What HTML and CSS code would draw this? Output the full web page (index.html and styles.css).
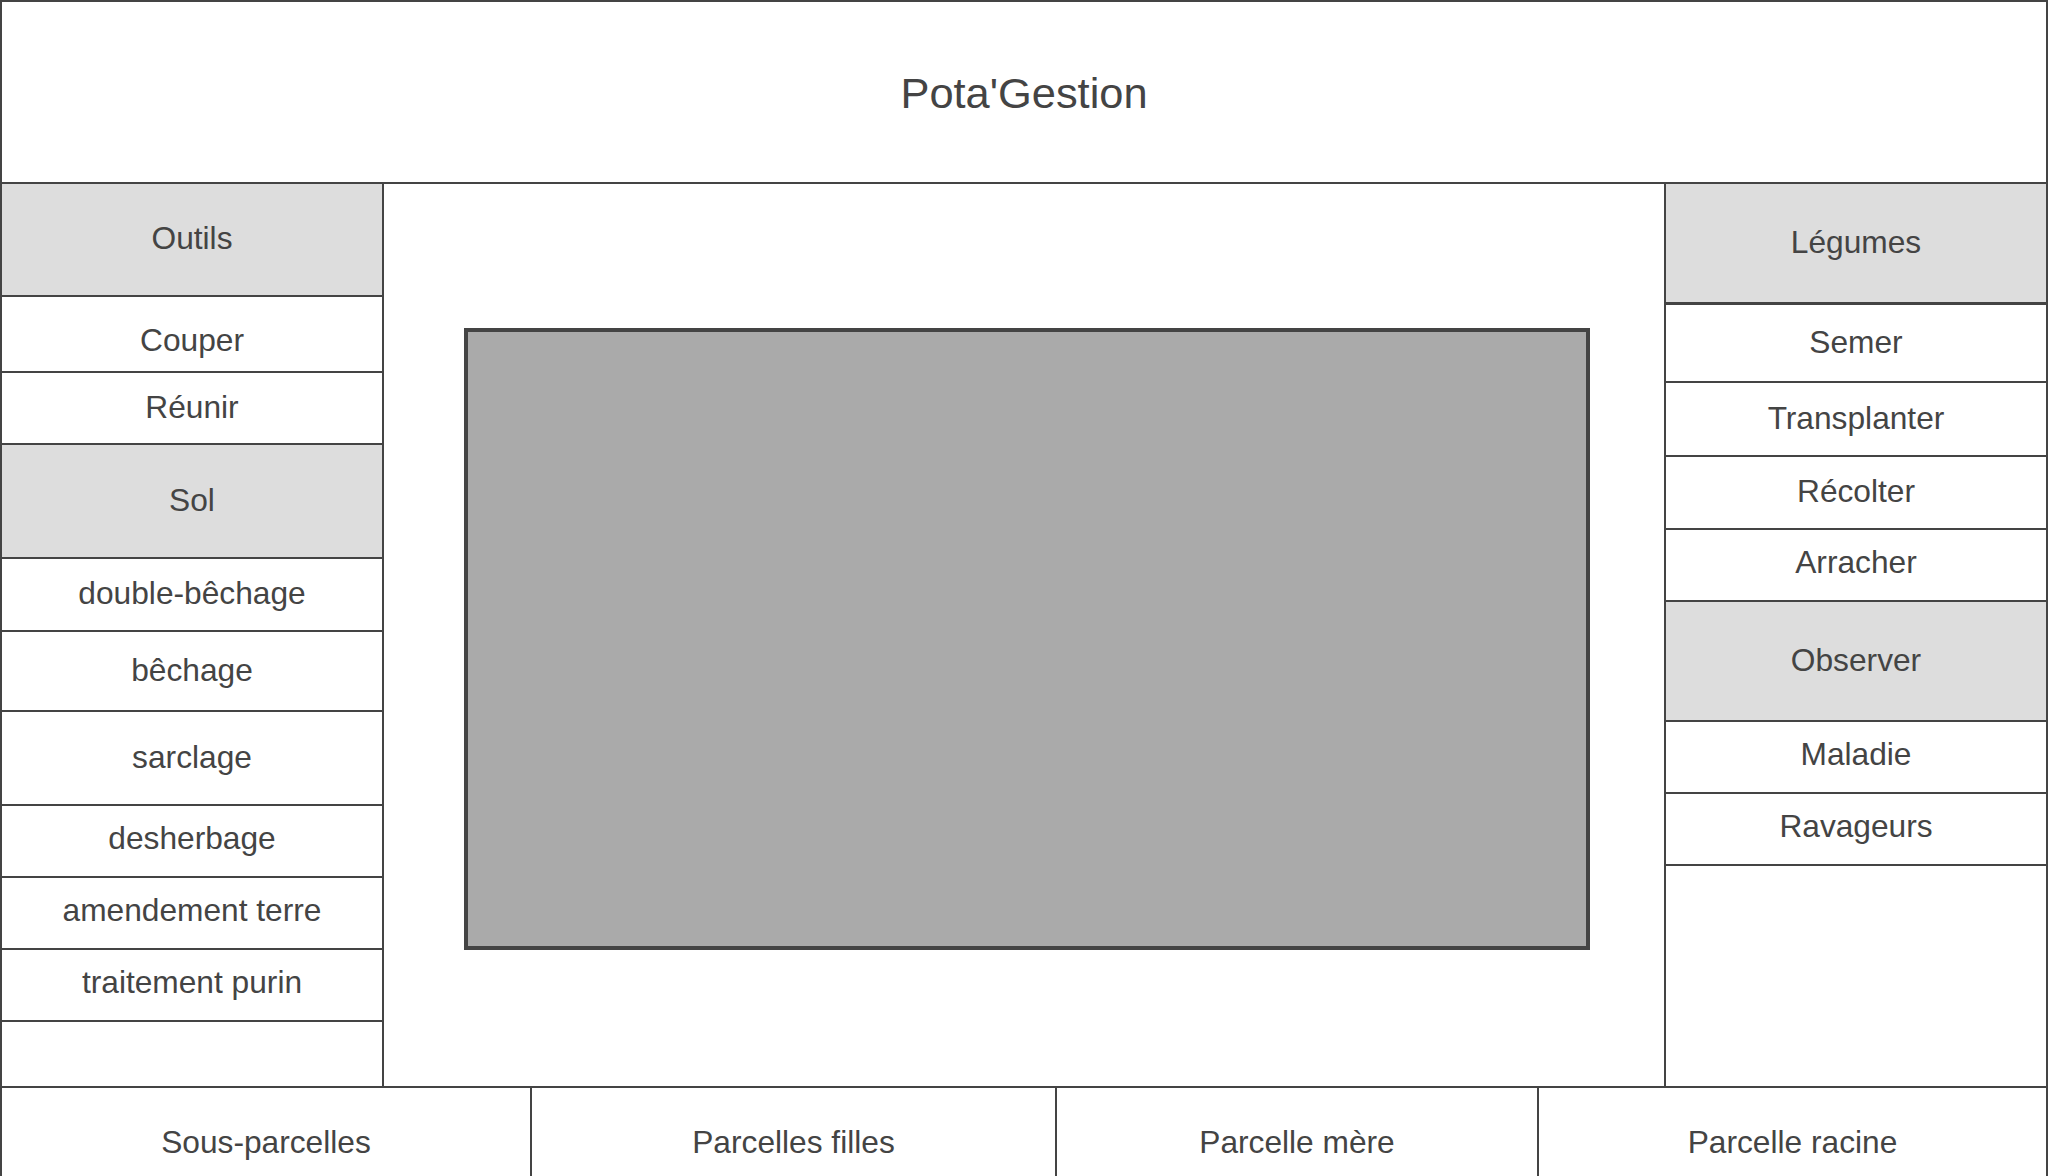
FILE: index.html
```html
<!DOCTYPE html>
<html lang="fr">
<head>
<meta charset="utf-8">
<title>Pota'Gestion</title>
<link rel="stylesheet" href="styles.css">
</head>
<body>
<div class="app">
  <header class="title">Pota'Gestion</header>
  <div class="main">
    <nav class="col col-left">
      <div class="cell group h113">Outils</div>
      <div class="cell h76 couper">Couper</div>
      <div class="cell h72">Réunir</div>
      <div class="cell group h114">Sol</div>
      <div class="cell h73">double-bêchage</div>
      <div class="cell h80">bêchage</div>
      <div class="cell h94">sarclage</div>
      <div class="cell h72 up">desherbage</div>
      <div class="cell h72 up">amendement terre</div>
      <div class="cell h72 up">traitement purin</div>
      <div class="cell fill"></div>
    </nav>
    <section class="center">
      <div class="canvas"></div>
    </section>
    <nav class="col col-right">
      <div class="cell group h121 thick">Légumes</div>
      <div class="cell h78">Semer</div>
      <div class="cell h74">Transplanter</div>
      <div class="cell h73">Récolter</div>
      <div class="cell h72 up">Arracher</div>
      <div class="cell group h120">Observer</div>
      <div class="cell h72 up">Maladie</div>
      <div class="cell h72 up">Ravageurs</div>
      <div class="cell fill"></div>
    </nav>
  </div>
  <footer class="footer">
    <div class="fcell">Sous-parcelles</div>
    <div class="fcell">Parcelles filles</div>
    <div class="fcell">Parcelle mère</div>
    <div class="fcell last">Parcelle racine</div>
  </footer>
</div>
</body>
</html>
```

FILE: styles.css
```css
* { box-sizing: border-box; }

html, body {
  margin: 0;
  padding: 0;
  width: 2048px;
  height: 1176px;
  overflow: hidden;
  background: #ffffff;
}

body {
  font-family: "Liberation Sans", Arial, sans-serif;
  color: #444444;
}

.app {
  width: 2048px;
  border: 2px solid #444444;
  border-bottom: none;
  display: flex;
  flex-direction: column;
}

.title {
  height: 182px;
  border-bottom: 2px solid #444444;
  display: flex;
  align-items: center;
  justify-content: center;
  font-size: 43.4px;
  padding-top: 2px;
}

.main {
  display: flex;
  height: 902px;
}

.col {
  width: 382px;
  display: flex;
  flex-direction: column;
  flex: none;
}

.col-left { border-right: 2px solid #444444; }
.col-right { border-left: 2px solid #444444; }

.cell {
  display: flex;
  align-items: center;
  justify-content: center;
  border-bottom: 2px solid #444444;
  font-size: 31.7px;
  flex: none;
  padding-bottom: 2px;
}

.cell.up { padding-bottom: 6px; }

.group { background: #dddddd; }
.thick { border-bottom-width: 3px; }
.couper { padding-top: 14px; }

.fill { flex: 1; border-bottom: none; }

.h72 { height: 72px; }
.h73 { height: 73px; }
.h74 { height: 74px; }
.h76 { height: 76px; }
.h78 { height: 78px; }
.h80 { height: 80px; }
.h94 { height: 94px; }
.h113 { height: 113px; }
.h114 { height: 114px; }
.h120 { height: 120px; }
.h121 { height: 121px; }

.center {
  flex: 1;
  padding: 144px 74px 136px 80px;
  display: flex;
}

.canvas {
  flex: 1;
  background: #aaaaaa;
  border: 4px solid #444444;
}

.footer {
  height: 114px;
  border-top: 2px solid #444444;
  display: grid;
  grid-template-columns: 530px 525px 482px 1fr;
}

.fcell {
  display: flex;
  align-items: center;
  justify-content: center;
  font-size: 31.7px;
  border-right: 2px solid #444444;
  padding-bottom: 3px;
}

.fcell.last { border-right: none; }
```
